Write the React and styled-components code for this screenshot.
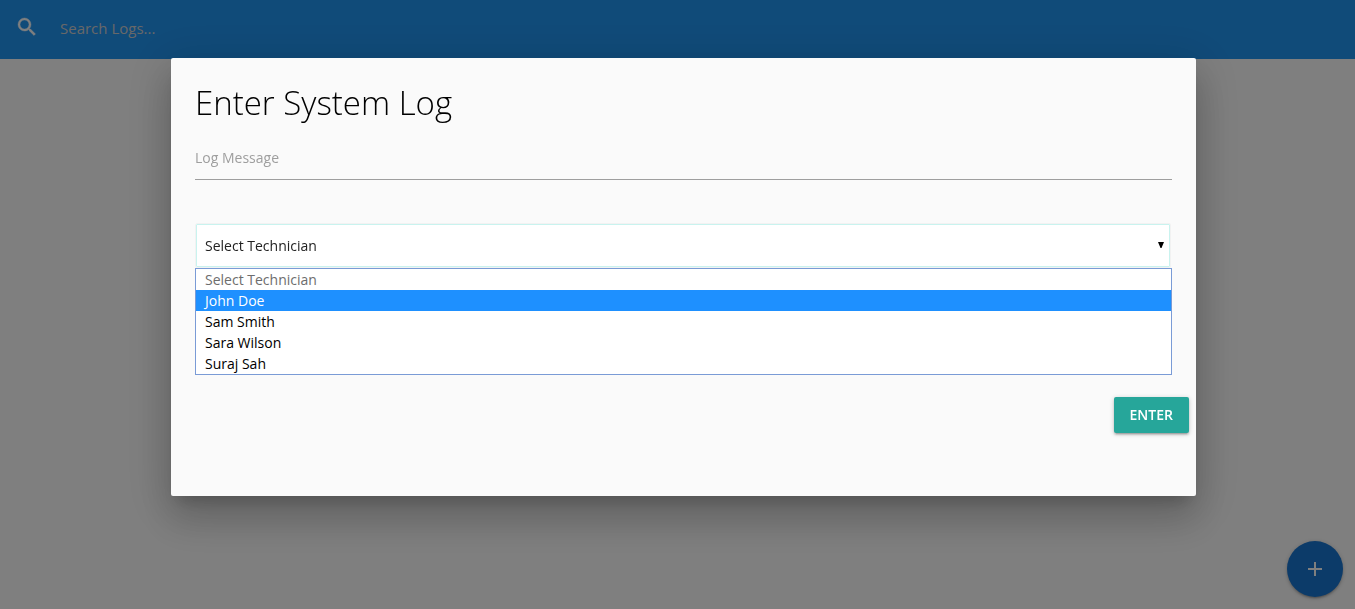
import React, { useState } from "react";
import styled, { createGlobalStyle } from "styled-components";

const GlobalStyle = createGlobalStyle`
  *, *::before, *::after { box-sizing: border-box; }
  body {
    margin: 0;
    background: #fff;
    color: rgba(0, 0, 0, 0.87);
    font-family: "Segoe UI", "Open Sans", "Noto Sans", sans-serif;
    font-size: 14px;
    line-height: 21px;
  }
  button, input, select { font: inherit; }
`;

const raised =
  "0 2px 2px 0 rgba(0,0,0,.14), 0 3px 1px -2px rgba(0,0,0,.12), 0 1px 5px 0 rgba(0,0,0,.2)";

const Nav = styled.nav`
  position: relative;
  height: 59px;
  background: #2196f3;
  box-shadow: ${raised};
`;

const SearchForm = styled.form`
  display: flex;
  align-items: center;
  height: 100%;
  padding: 0 15px 4px;
`;

const SearchLabel = styled.label`
  display: flex;
  width: 45px;
  padding-bottom: 2px;
  color: #fff;
`;

const SearchInput = styled.input`
  flex: 1;
  height: 40px;
  padding: 0;
  border: 0;
  outline: 0;
  background: transparent;
  font-size: 15px;
  color: #fff;
  &::placeholder { color: #d1d1d1; opacity: 1; }
`;

const AddButton = styled.button`
  position: fixed;
  right: 12px;
  bottom: 12px;
  display: flex;
  align-items: center;
  justify-content: center;
  width: 56px;
  height: 56px;
  padding: 0;
  border: 0;
  border-radius: 50%;
  background: #1976d2;
  color: #fff;
  box-shadow: ${raised};
`;

const Overlay = styled.div`
  position: fixed;
  inset: 0;
  padding: 58px 159px 0 171px;
  background: rgba(0, 0, 0, 0.5);
  overflow: hidden;
`;

const Modal = styled.section`
  padding-bottom: 63px;
  border-radius: 2px;
  background: #fafafa;
  box-shadow: 0 24px 38px 3px rgba(0, 0, 0, 0.14),
    0 9px 46px 8px rgba(0, 0, 0, 0.12), 0 11px 15px -7px rgba(0, 0, 0, 0.2);
`;

const ModalBody = styled.div`
  padding: 24px 24px 0;
`;

const Title = styled.h4`
  margin: 0 0 14px;
  font-size: 33px;
  line-height: 42px;
  font-weight: 300;
  color: #000;
`;

const MessageInput = styled.input`
  display: block;
  width: 100%;
  height: 42px;
  padding: 0 0 2px;
  border: 0;
  border-bottom: 1px solid #9e9e9e;
  outline: 0;
  background: transparent;
  &::placeholder { color: #9e9e9e; opacity: 1; }
`;

const SelectField = styled.div`
  position: relative;
  margin-top: 43px;
`;

const Select = styled.select`
  display: block;
  width: calc(100% - 1px);
  height: 45px;
  padding: 0 9px;
  border: 1px solid #f2f2f2;
  border-radius: 2px;
  outline: 1px solid #c9f3ef;
  outline-offset: -2px;
  appearance: none;
  background: #fff;
  color: #222;
`;

const Caret = styled.svg`
  position: absolute;
  top: 19px;
  right: 7px;
  pointer-events: none;
`;

const Options = styled.ul`
  position: absolute;
  top: 100%;
  left: 0;
  right: 0;
  margin: 0;
  padding: 0;
  border: 1px solid #7a9bd6;
  background: #fff;
  list-style: none;
`;

const Option = styled.li`
  padding: 0 9px;
  line-height: 21px;
  color: ${(p) => (p.$active ? "#fff" : p.$muted ? "#6d6d6d" : "#000")};
  background: ${(p) => (p.$active ? "#1e90ff" : "transparent")};
`;

const Footer = styled.footer`
  display: flex;
  justify-content: flex-end;
  margin-top: 129px;
  padding: 0 7px;
`;

const EnterButton = styled.button`
  height: 36px;
  padding: 0 16px 2px;
  border: 0;
  border-radius: 2px;
  background: #26a69a;
  color: #fff;
  font-size: 14px;
  font-weight: 600;
  text-transform: uppercase;
  box-shadow: ${raised};
`;

const technicians = ["John Doe", "Sam Smith", "Sara Wilson", "Suraj Sah"];

export default function App() {
  const [technician, setTechnician] = useState("");
  return (
    <>
      <GlobalStyle />
      <Nav>
        <SearchForm>
          <SearchLabel htmlFor="search" aria-label="Search">
            <svg width="24" height="24" viewBox="0 0 24 24" fill="currentColor" stroke="currentColor" strokeWidth="0.4">
              <path d="M15.5 14h-.79l-.28-.27A6.47 6.47 0 0 0 16 9.500 6.500 6.500 0 1 0 9.500 16c1.610 0 3.090-.59 4.230-1.570l.27.28v.79l5 4.990L20.490 19l-4.990-5zm-6 0C7.010 14 5 11.990 5 9.500S7.010 5 9.500 5 14 7.010 14 9.500 11.990 14 9.500 14z" />
            </svg>
          </SearchLabel>
          <SearchInput id="search" type="search" placeholder="Search Logs..." />
        </SearchForm>
      </Nav>
      <AddButton type="button" aria-label="Add log">
        <svg width="24" height="24" viewBox="0 0 24 24" fill="currentColor">
          <path d="M19 13h-6v6h-2v-6H5v-2h6V5h2v6h6v2z" />
        </svg>
      </AddButton>
      <Overlay>
        <Modal role="dialog" aria-labelledby="log-title">
          <ModalBody>
            <Title id="log-title">Enter System Log</Title>
            <MessageInput type="text" aria-label="Log Message" placeholder="Log Message" />
            <SelectField>
              <Select
                aria-label="Technician"
                value={technician}
                onChange={(e) => setTechnician(e.target.value)}
              >
                <option value="" disabled>Select Technician</option>
                {technicians.map((name) => (
                  <option key={name} value={name}>{name}</option>
                ))}
              </Select>
              <Caret width="8" height="6" viewBox="0 0 8 6" aria-hidden="true">
                <path d="M1 0h6L4.500 6h-1z" fill="#000" />
              </Caret>
              <Options role="listbox" aria-label="Technicians">
                <Option role="option" $muted>Select Technician</Option>
                {technicians.map((name, i) => (
                  <Option
                    key={name}
                    role="option"
                    $active={i === 0}
                    onClick={() => setTechnician(name)}
                  >
                    {name}
                  </Option>
                ))}
              </Options>
            </SelectField>
          </ModalBody>
          <Footer>
            <EnterButton type="button">Enter</EnterButton>
          </Footer>
        </Modal>
      </Overlay>
    </>
  );
}
